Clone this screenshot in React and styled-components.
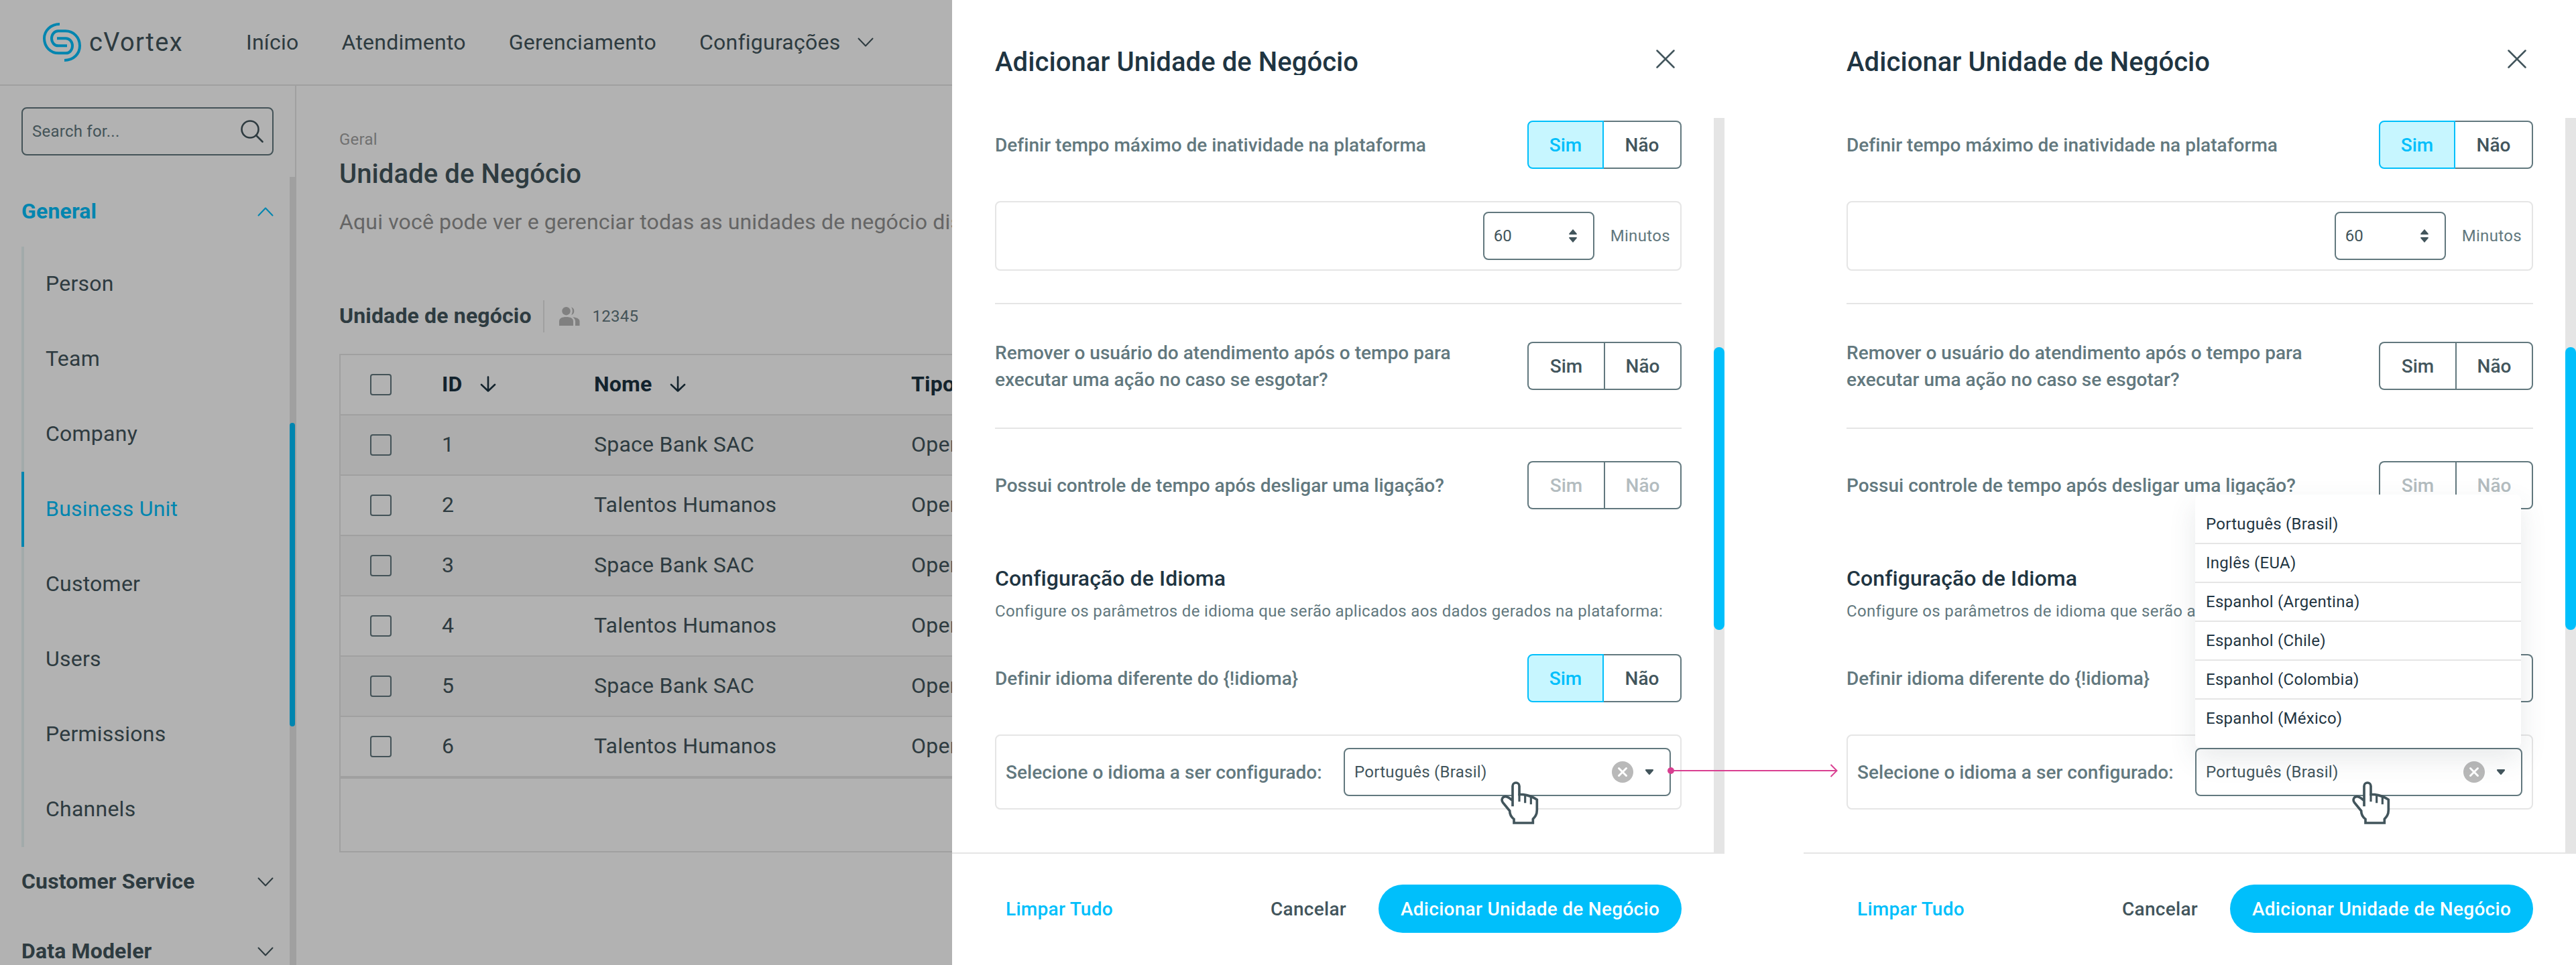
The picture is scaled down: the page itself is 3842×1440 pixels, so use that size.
import React from 'react';
import styled, { createGlobalStyle } from 'styled-components';

const menu = ['Person', 'Team', 'Company', 'Business Unit', 'Customer', 'Users', 'Permissions', 'Channels'];

const units = [
  { id: 1, name: 'Space Bank SAC' },
  { id: 2, name: 'Talentos Humanos' },
  { id: 3, name: 'Space Bank SAC' },
  { id: 4, name: 'Talentos Humanos' },
  { id: 5, name: 'Space Bank SAC' },
  { id: 6, name: 'Talentos Humanos' },
];

const languages = [
  'Português (Brasil)',
  'Inglês (EUA)',
  'Espanhol (Argentina)',
  'Espanhol (Chile)',
  'Espanhol (Colombia)',
  'Espanhol (México)',
];

const Chevron = ({ up }) => (
  <svg width="24" height="14" viewBox="0 0 24 14" fill="none" stroke="currentColor" strokeWidth="2" strokeLinecap="round" strokeLinejoin="round">
    <path d={up ? 'M1.5 12.5 12 1.5l10.5 11' : 'M1.5 1.5 12 12.5l10.5-11'} />
  </svg>
)

const SortArrow = () => (
  <svg width="24" height="24" viewBox="0 0 24 24" fill="none" stroke="currentColor" strokeWidth="2.6" strokeLinecap="round" strokeLinejoin="round">
    <path d="M12 1.5v21M2 13l10 9.5L22 13" />
  </svg>
)

const LogoMark = () => (
  <svg width="60" height="62" viewBox="36 24 180 186" fill="none" stroke="#00bffb" strokeWidth="12">
    <path d="M117 36C78 36 48 64 48 100c0 38 28 66 64 66h33c17 0 29-15 29-33s-12-33-30-33h-39" />
    <path d="M138 198c40 0 69-28 69-65 0-38-28-66-64-66h-33c-17 0-29 15-29 33s12 33 30 33h39" />
  </svg>
)

const People = () => (
  <svg width="32" height="28" viewBox="0 0 32 28" fill="#b8b8b8">
    <circle cx="10.5" cy="6.2" r="6.2" />
    <path d="M18 0.3a6.2 6.2 0 0 1 0 11.8c2.4-3.4 2.4-8.4 0-11.8Z" />
    <path d="M0 28v-6.5C0 17 4 15 10.5 15S21 17 21 21.5V28Z" />
    <path d="M20 15.2c7 .8 10.5 2.6 10.5 6.3V28H24v-6.5c0-2.6-1.4-4.7-4-6.3Z" />
  </svg>
)

const HandPointer = () => (
  <svg width="60" height="68" viewBox="108 162 180 204" fill="#fff" stroke="#42555c" strokeWidth="11">
    <path d="M168 254C154 243 146 235 135 236c-13 1-19 14-11 26l31 38c0 14 6 27 19 37v17h85v-17c9-10 18-20 18-41v-46c-20-14-48-24-79-24v-37a15 15 0 0 0-30 0v91" />
    <path d="M198 224v35M224 230v35M250 238v33" fill="none" strokeWidth="9.5" />
  </svg>
)

function Toggle({ active, disabled }) {
  return (
    <ToggleGroup>
      <ToggleOption $first $active={active} $disabled={disabled}>Sim</ToggleOption>
      <ToggleOption $afterActive={active} $disabled={disabled}>Não</ToggleOption>
    </ToggleGroup>
  )
}

function LanguageSelect({ open }) {
  return (
    <Select>
      <SelectValue>Português (Brasil)</SelectValue>
      <svg width="32" height="32" viewBox="0 0 32 32">
        <circle cx="16" cy="16" r="16" fill="#b9b9b9" />
        <path d="M10.5 10.5l11 11M21.5 10.5l-11 11" stroke="#fff" strokeWidth="3" strokeLinecap="round" />
      </svg>
      <svg width="12" height="8" viewBox="0 0 12 8" fill="#42555c">
        <path d="M1 0h10c1 0 1.3 1.4.6 2.2L7 7.4c-.6.7-1.4.7-2 0L.4 2.2C-.3 1.4 0 0 1 0Z" />
      </svg>
      {open && (
        <Dropdown>
          {languages.map((l) => <DropdownItem key={l}>{l}</DropdownItem>)}
        </Dropdown>
      )}
      <Cursor><HandPointer /></Cursor>
    </Select>
  )
}

function UnitPanel({ open }) {
  return (
    <Panel>
      <PanelHeader>
        <PanelTitle>Adicionar Unidade de Negócio</PanelTitle>
        <svg width="28" height="28" viewBox="0 0 28 28" fill="none" stroke="#42555c" strokeWidth="2.5" strokeLinecap="round">
          <path d="M1.5 1.5l25 25M26.5 1.5l-25 25" />
        </svg>
      </PanelHeader>
      <PanelBody>
        <Fields>
          <Field>
            <Label>Definir tempo máximo de inatividade na plataforma</Label>
            <Toggle active />
          </Field>
          <Box>
            <NumberInput>
              60
              <svg width="12" height="20" viewBox="0 0 12 20" fill="#42555c">
                <path d="M6 0l5.6 6.4c.6.7.3 1.6-.6 1.6H1C.1 8-.2 7.100.4 6.400ZM6 20l5.6-6.4c.6-.7.3-1.6-.6-1.6H1c-.9 0-1.2.9-.6 1.6Z" />
              </svg>
            </NumberInput>
            <Unit>Minutos</Unit>
          </Box>
          <Divider />
          <Field $pad>
            <Label>Remover o usuário do atendimento após o tempo para<br />executar uma ação no caso se esgotar?</Label>
            <Toggle />
          </Field>
          <Divider $tight />
          <Field>
            <Label>Possui controle de tempo após desligar uma ligação?</Label>
            <Toggle disabled />
          </Field>
          <SectionTitle>Configuração de Idioma</SectionTitle>
          <SectionText>Configure os parâmetros de idioma que serão aplicados aos dados gerados na plataforma:</SectionText>
          <Field>
            <Label>Definir idioma diferente do {'{!idioma}'}</Label>
            <Toggle active />
          </Field>
          <Box $tall>
            <Label>Selecione o idioma a ser configurado:</Label>
            <LanguageSelect open={open} />
          </Box>
        </Fields>
        <PanelTrack><PanelThumb /></PanelTrack>
      </PanelBody>
      <PanelFooter>
        <TextButton $primary>Limpar Tudo</TextButton>
        <TextButton>Cancelar</TextButton>
        <SubmitButton>Adicionar Unidade de Negócio</SubmitButton>
      </PanelFooter>
    </Panel>
  )
}

function Sidebar() {
  return (
    <Side>
      <SideMain>
        <Search>
          Search for...
          <svg width="34" height="34" viewBox="0 0 34 34" fill="none" stroke="#42555c" strokeWidth="2.6" strokeLinecap="round">
            <circle cx="14" cy="14" r="12.5" />
            <path d="M23 23l9.5 9.5" />
          </svg>
        </Search>
        <Group $active><GroupName>General</GroupName><Chevron up /></Group>
        <SubMenu>
          {menu.map((m) => <SubItem key={m} $active={m === 'Business Unit'}>{m}</SubItem>)}
        </SubMenu>
        <Group><GroupName>Customer Service</GroupName><Chevron /></Group>
        <Group><GroupName>Data Modeler</GroupName><Chevron /></Group>
      </SideMain>
      <SideTrack><SideThumb /></SideTrack>
    </Side>
  )
}

function App() {
  return (
    <>
      <GlobalStyle />
      <Board>
        <Backdrop>
          <TopBar>
            <Logo><LogoMark /><LogoText>cVortex</LogoText></Logo>
            <NavItem>Início</NavItem>
            <NavItem>Atendimento</NavItem>
            <NavItem>Gerenciamento</NavItem>
            <NavItem>Configurações <Chevron /></NavItem>
          </TopBar>
          <Columns>
            <Sidebar />
            <Main>
              <Crumb>Geral</Crumb>
              <Title>Unidade de Negócio</Title>
              <Description>Aqui você pode ver e gerenciar todas as unidades de negócio disponíveis</Description>
              <ListHeader>
                <ListTitle>Unidade de negócio</ListTitle>
                <People />
                <Count>12345</Count>
              </ListHeader>
              <Table>
                <Row $head>
                  <Check />
                  <Cell>ID<SortArrow /></Cell>
                  <Cell>Nome<SortArrow /></Cell>
                  <Cell>Tipo</Cell>
                </Row>
                {units.map((u) => (
                  <Row key={u.id} $odd={u.id % 2 === 1}>
                    <Check />
                    <Cell>{u.id}</Cell>
                    <Cell>{u.name}</Cell>
                    <Cell>Operação</Cell>
                  </Row>
                ))}
                <TableFooter />
              </Table>
            </Main>
          </Columns>
          <Overlay />
        </Backdrop>
        <UnitPanel />
        <Spacer />
        <UnitPanel open />
        <Connector width="256" height="20" viewBox="0 0 256 20" fill="none" stroke="#d93f91" strokeWidth="2">
          <circle cx="6" cy="10" r="5" fill="#d93f91" stroke="none" />
          <path d="M6 10h247M244.5 1l9 9-9 9" />
        </Connector>
      </Board>
    </>
  )
}

export default App;

const GlobalStyle = createGlobalStyle`
  * {
    box-sizing: border-box;
  }

  body {
    margin: 0;
    background: #fff;
    color: #42555c;
    font-family: Roboto, "Liberation Sans", sans-serif;
    font-size: 32px;
    letter-spacing: 0.24px;
  }

  svg {
    flex: none;
    display: block;
  }
`
const Board = styled.div`
  position: relative;
  display: flex;
  width: 3842px;
  height: 1440px;
  overflow: hidden;
`
const Backdrop = styled.div`
  position: relative;
  display: flex;
  flex-direction: column;
  width: 1420px;
  height: 1440px;
  overflow: hidden;
  flex: none;
  background: #fff;
`
const Overlay = styled.div`
  position: absolute;
  inset: 0;
  background: rgba(0, 0, 0, 0.3);
`
const TopBar = styled.header`
  display: flex;
  align-items: center;
  height: 128px;
  padding-left: 62px;
  border-bottom: 2px solid #e5e5e5;
  flex: none;
`
const Logo = styled.div`
  display: flex;
  align-items: center;
  gap: 11px;
  width: 305px;
`
const LogoText = styled.span`
  font-size: 38px;
  line-height: 60px;
  letter-spacing: 1.4px;
`
const NavItem = styled.a`
  display: flex;
  align-items: center;
  gap: 26px;
  margin-right: 64px;
  line-height: 40px;
  white-space: nowrap;
`
const Columns = styled.div`
  display: flex;
  flex: 1;
  min-height: 0;
`
const Side = styled.aside`
  display: flex;
  width: 442px;
  flex: none;
  border-right: 2px solid #e5e5e5;
`
const SideMain = styled.div`
  width: 432px;
  padding: 32px 24px 0 32px;
`
const Search = styled.div`
  display: flex;
  align-items: center;
  justify-content: space-between;
  height: 72px;
  padding: 0 13px 0 14px;
  margin-bottom: 32px;
  border: 2px solid #62787e;
  border-radius: 8px;
  font-size: 24px;
  color: #62787e;
`
const GroupName = styled.span`
  padding-bottom: 3px;
  letter-spacing: 0.15px;
`
const Group = styled.div`
  display: flex;
  align-items: center;
  justify-content: space-between;
  height: 104px;
  font-weight: 700;
  color: ${({ $active }) => ($active ? '#00bffb' : '#42555c')};
`
const SubMenu = styled.div`
  display: flex;
  flex-direction: column;
`
const SubItem = styled.div`
  display: flex;
  align-items: center;
  height: 112px;
  padding: 0 0 2px 32px;
  border-left: 4px solid ${({ $active }) => ($active ? '#00bffb' : '#e9f4f4')};
  color: ${({ $active }) => ($active ? '#00bffb' : 'inherit')};
`
const SideTrack = styled.div`
  width: 8px;
  height: 1176px;
  margin-top: 136px;
  padding-top: 367px;
  flex: none;
  background: #e5e5e5;
`
const SideThumb = styled.div`
  height: 453px;
  border-radius: 4px;
  background: #00bffb;
`
const Main = styled.main`
  display: flex;
  flex-direction: column;
  width: 1200px;
  padding: 64px 0 0 64px;
  flex: none;
`
const Crumb = styled.div`
  font-size: 24px;
  line-height: 32px;
  color: #a3a3a3;
`
const Title = styled.h1`
  margin: 12px 0 0;
  font-size: 40px;
  font-weight: 500;
  line-height: 48px;
  letter-spacing: 0.08px;
`
const Description = styled.p`
  margin: 23px 0 0;
  line-height: 48px;
  letter-spacing: 0.15px;
  white-space: nowrap;
  color: #919191;
`
const ListHeader = styled.div`
  display: flex;
  align-items: center;
  height: 48px;
  margin: 93px 0 32px;
`
const ListTitle = styled.h2`
  display: flex;
  align-items: center;
  height: 48px;
  margin: 0 22px 0 0;
  padding: 0 17px 2px 0;
  border-right: 2px solid #e5e5e5;
  font-size: 32px;
  font-weight: 700;
  letter-spacing: 0.15px;
`
const Count = styled.span`
  margin-left: 18px;
  font-size: 24px;
  color: #62787e;
`
const Table = styled.div`
  border: 2px solid #e5e5e5;
  height: 744px;
`
const Row = styled.div`
  display: grid;
  grid-template-columns: 151px 227px 473px auto;
  align-items: center;
  height: 90px;
  border-bottom: 2px solid #e5e5e5;
  background: ${({ $odd }) => ($odd ? '#f8f8f8' : '#fff')};
  font-weight: ${({ $head }) => ($head ? 700 : 400)};
  color: ${({ $head }) => ($head ? '#1c3341' : 'inherit')};
`
const Check = styled.span`
  width: 32px;
  height: 32px;
  margin-left: 44px;
  border: 2px solid #62787e;
  border-radius: 4px;
`
const Cell = styled.span`
  display: flex;
  align-items: center;
  gap: 26px;
  padding-bottom: 2px;
  white-space: nowrap;
`
const TableFooter = styled.div`
  border-top: 2px solid #e5e5e5;
`
const Panel = styled.section`
  display: flex;
  flex-direction: column;
  width: 1152px;
  height: 1440px;
  flex: none;
  background: #fff;
`
const Spacer = styled.div`
  width: 118px;
  flex: none;
`
const PanelHeader = styled.header`
  display: flex;
  justify-content: space-between;
  height: 176px;
  padding: 72px 74px 0 64px;
  flex: none;

  svg {
    margin-top: 2px;
  }
`
const PanelTitle = styled.h2`
  height: 40px;
  margin: 0;
  overflow: hidden;
  font-size: 40px;
  font-weight: 500;
  line-height: 41px;
  letter-spacing: 0.06px;
  color: #1f3542;
`
const PanelBody = styled.div`
  display: flex;
  height: 1096px;
  flex: none;
`
const Fields = styled.div`
  width: 1136px;
  padding: 4px 48px 0 64px;
`
const Field = styled.div`
  display: flex;
  align-items: center;
  justify-content: space-between;
  min-height: 72px;
  padding: ${({ $pad }) => ($pad ? '51px 0' : '0')};
`
const Label = styled.span`
  padding-top: 2px;
  font-size: 28px;
  font-weight: 500;
  line-height: 40px;
  letter-spacing: 0.02px;
  white-space: nowrap;
  color: #62787e;
`
const ToggleGroup = styled.div`
  display: flex;
  width: 230px;
  height: 72px;
`
const ToggleOption = styled.button`
  display: flex;
  align-items: center;
  justify-content: center;
  width: ${({ $first }) => ($first ? '114px' : '116px')};
  padding: 1px 0 0;
  border: 2px solid ${({ $active }) => ($active ? '#00bffb' : '#62787e')};
  ${({ $first, $active }) => $first && !$active && 'border-right: 0;'}
  ${({ $afterActive }) => $afterActive && 'border-left: 0;'}
  border-radius: ${({ $first }) => ($first ? '8px 0 0 8px' : '0 8px 8px 0')};
  background: ${({ $active }) => ($active ? '#c7f6ff' : '#fff')};
  font: 500 28px Roboto, sans-serif;
  color: ${({ $active, $disabled }) => ($active ? '#00bffb' : $disabled ? '#b3bcbf' : '#42555c')};
`
const Box = styled.div`
  display: flex;
  align-items: center;
  justify-content: ${({ $tall }) => ($tall ? 'space-between' : 'flex-end')};
  height: ${({ $tall }) => ($tall ? '112px' : '104px')};
  margin-top: 48px;
  padding: 0 14px;
  border: 2px solid #e5e5e5;
  border-radius: 8px;
`
const NumberInput = styled.div`
  display: flex;
  align-items: center;
  justify-content: space-between;
  width: 166px;
  height: 72px;
  padding: 0 24px 0 14px;
  border: 2px solid #62787e;
  border-radius: 8px;
  font-size: 24px;
`
const Unit = styled.span`
  margin-left: 24px;
  padding-right: 1px;
  font-size: 24px;
  letter-spacing: 0.34px;
  color: #62787e;
`
const Divider = styled.hr`
  height: 2px;
  margin: ${({ $tight }) => ($tight ? '0 0 48px' : '48px 0 0')};
  border: 0;
  background: #e5e5e5;
`
const SectionTitle = styled.h3`
  margin: 83px 0 13px;
  font-size: 32px;
  font-weight: 500;
  line-height: 40px;
  letter-spacing: 0.1px;
  color: #1f3542;
`
const SectionText = styled.p`
  margin: 0 0 48px;
  font-size: 24px;
  line-height: 32px;
  letter-spacing: 0.33px;
  white-space: nowrap;
  color: #62787e;
`
const Select = styled.div`
  position: relative;
  display: flex;
  align-items: center;
  width: 488px;
  height: 72px;
  padding: 0 24px 0 14px;
  gap: 18px;
  border: 2px solid #62787e;
  border-radius: 8px;
  font-size: 24px;
  letter-spacing: 0.28px;
`
const SelectValue = styled.span`
  flex: 1;
`
const Dropdown = styled.div`
  position: absolute;
  left: -2px;
  bottom: 70px;
  width: 486px;
  padding: 16px 0;
  border-radius: 8px;
  background: #fff;
  box-shadow: 0 16px 40px rgba(66, 85, 92, 0.12);
`
const DropdownItem = styled.div`
  display: flex;
  align-items: center;
  height: 58px;
  padding: 0 16px;
  border-bottom: 2px solid #e5e5e5;
  color: #1f3542;

  &:last-child {
    height: 56px;
    border-bottom: 0;
  }
`
const Cursor = styled.span`
  position: absolute;
  left: 230px;
  top: 46px;
`
const PanelTrack = styled.div`
  width: 16px;
  height: 1098px;
  padding-top: 342px;
  background: #e5e5e5;
`
const PanelThumb = styled.div`
  height: 422px;
  border-radius: 8px;
  background: #00bffb;
`
const PanelFooter = styled.footer`
  display: flex;
  align-items: center;
  height: 168px;
  padding: 0 64px 2px 80px;
  border-top: 2px solid #e5e5e5;
  flex: none;
`
const TextButton = styled.button`
  padding: 0;
  border: 0;
  margin: ${({ $primary }) => ($primary ? '0 auto 0 0' : '0 48px 0 0')};
  background: none;
  font: 500 28px Roboto, sans-serif;
  letter-spacing: 0.28px;
  color: ${({ $primary }) => ($primary ? '#00bffb' : '#42555c')};
`
const SubmitButton = styled.button`
  width: 452px;
  height: 72px;
  padding: 0;
  border: 0;
  border-radius: 36px;
  background: #00bffb;
  font: 500 28px Roboto, sans-serif;
  letter-spacing: 0.28px;
  white-space: nowrap;
  color: #fff;
`
const Connector = styled.svg`
  position: absolute;
  left: 2486px;
  top: 1140px;
`
